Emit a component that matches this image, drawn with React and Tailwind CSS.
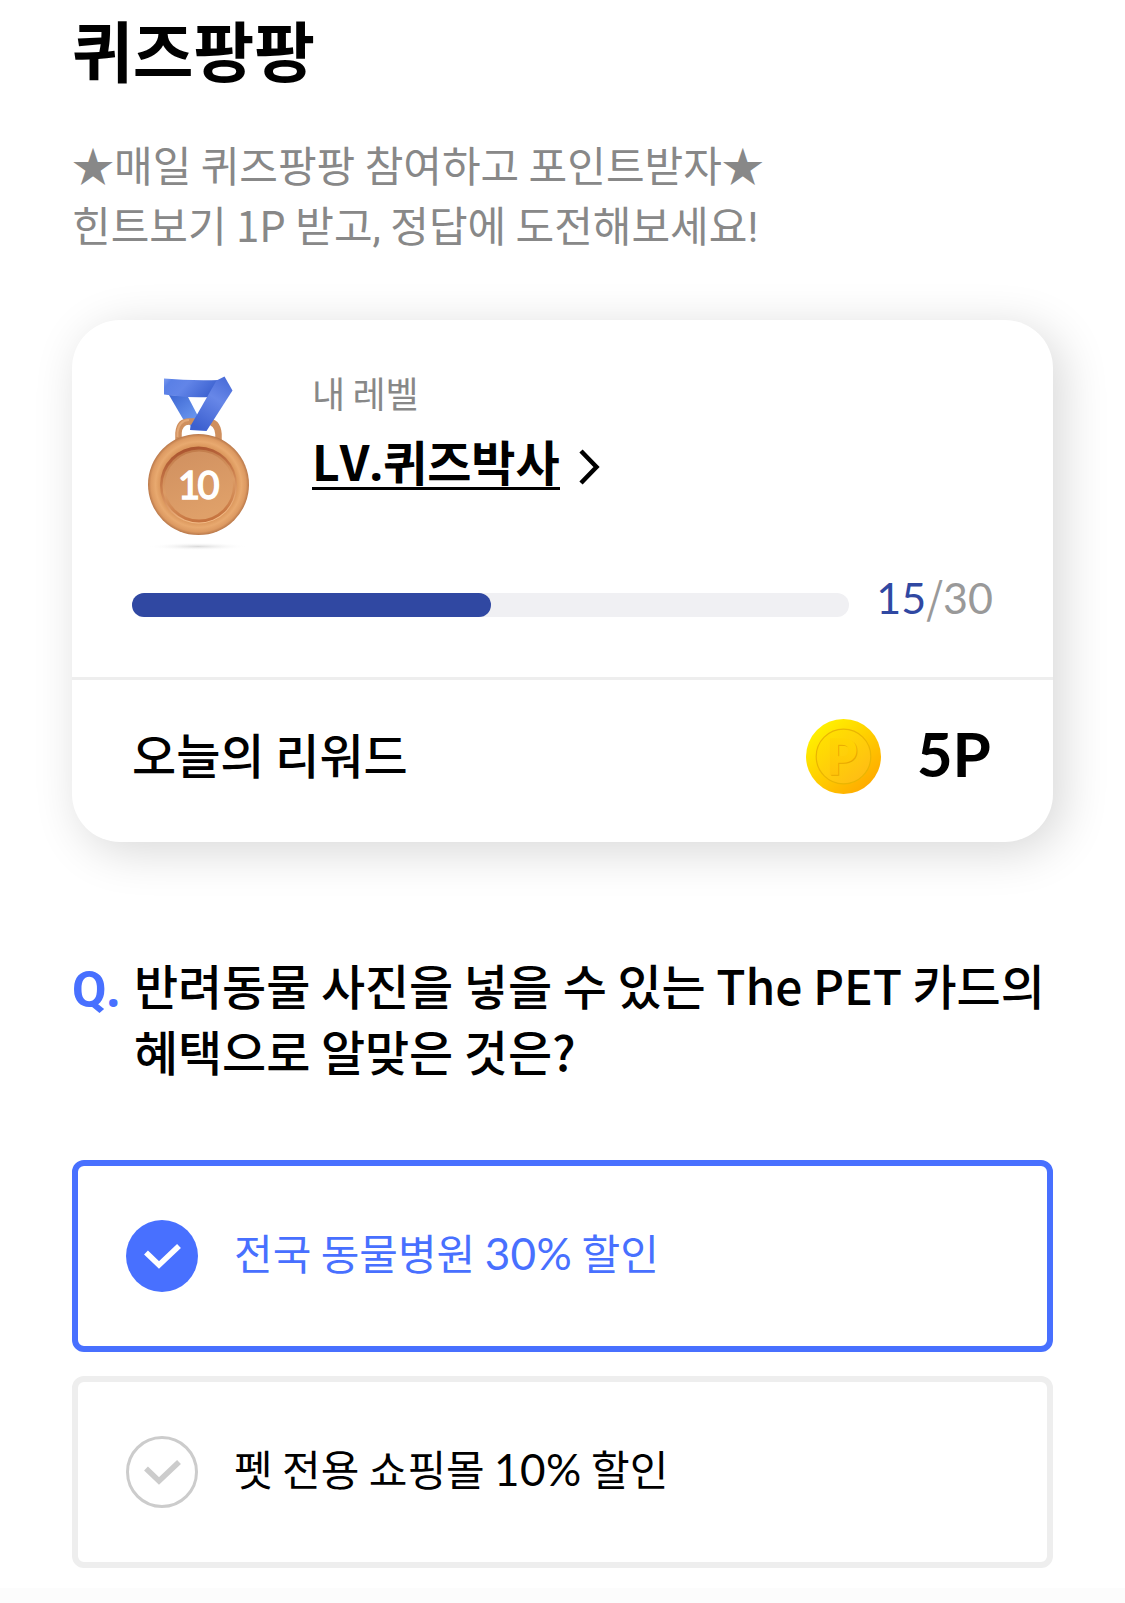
import { useState } from 'react'

const options = [
  { id: 1, before: '전국 동물병원 ', rate: '30%', after: ' 할인' },
  { id: 2, before: '펫 전용 쇼핑몰 ', rate: '10%', after: ' 할인' },
]

const level = { name: '퀴즈박사', current: 15, total: 30 }

function Medal() {
  return (
    <svg width="132" height="180" viewBox="0 0 132 180" className="block shrink-0">
      <defs>
        <linearGradient id="ribbonTop" x1="0" y1="0" x2="1" y2="0.3">
          <stop offset="0" stopColor="#7c9cf0" />
          <stop offset="0.15" stopColor="#5a80e6" />
          <stop offset="0.45" stopColor="#6285e8" />
          <stop offset="1" stopColor="#3d62d0" />
        </linearGradient>
        <linearGradient id="ribbonLeft" x1="0" y1="0" x2="0.7" y2="1">
          <stop offset="0" stopColor="#3d66d2" />
          <stop offset="1" stopColor="#709df3" />
        </linearGradient>
        <linearGradient id="ribbonFront" x1="0.8" y1="0" x2="0.3" y2="1">
          <stop offset="0" stopColor="#4a6cd8" />
          <stop offset="0.4" stopColor="#6787e8" />
          <stop offset="1" stopColor="#3c60d0" />
        </linearGradient>
        <radialGradient id="rim" cx="0.5" cy="0.5" r="0.5">
          <stop offset="0.74" stopColor="#d99459" />
          <stop offset="0.85" stopColor="#e8a96f" />
          <stop offset="0.94" stopColor="#dd9a62" />
          <stop offset="1" stopColor="#b9784a" />
        </radialGradient>
        <linearGradient id="groove" x1="0.35" y1="0" x2="0.6" y2="1">
          <stop offset="0" stopColor="#a9522e" />
          <stop offset="0.45" stopColor="#cb7f4d" />
          <stop offset="1" stopColor="#f6c08b" />
        </linearGradient>
        <linearGradient id="grooveInner" x1="0.4" y1="0" x2="0.6" y2="1">
          <stop offset="0" stopColor="#c07a49" />
          <stop offset="0.5" stopColor="#dc9c66" />
          <stop offset="1" stopColor="#c4703c" />
        </linearGradient>
        <linearGradient id="face" x1="0" y1="0" x2="0.4" y2="1">
          <stop offset="0" stopColor="#d09060" />
          <stop offset="1" stopColor="#dfa069" />
        </linearGradient>
        <radialGradient id="ground">
          <stop offset="0" stopColor="#d9d9d9" />
          <stop offset="1" stopColor="#ffffff" stopOpacity="0" />
        </radialGradient>
      </defs>
      <ellipse cx="66" cy="171.500" rx="50" ry="4" fill="url(#ground)" />
      {/* ribbon */}
      <path d="M37 20 L55.500 21 L67 43 L62 54 L51 44 Z" fill="url(#ribbonLeft)" />
      <path d="M32 3.500 Q58 6 88 5 L78 22 Q54 23 32 19.500 Z" fill="url(#ribbonTop)" />
      {/* ring */}
      <path d="M46.500 66 L46.500 58 Q47.500 46.500 57 46.500 L75 46.500 Q85.500 46.500 86.500 59 L86.500 66" fill="none" stroke="#cf8f5d" strokeWidth="6.500" />
      <path d="M45.500 62 L45.500 57 Q47 45.500 57 45" fill="none" stroke="#e3a877" strokeWidth="2" />
      <path d="M92.500 1.500 L100.500 15.500 L74.500 56 L58 55 L58.500 51 L84.500 5.500 Z" fill="url(#ribbonFront)" />
      {/* disc */}
      <circle cx="66.500" cy="109.500" r="50.500" fill="url(#rim)" />
      <circle cx="66.500" cy="110" r="38.500" fill="url(#groove)" />
      <circle cx="67" cy="111" r="36.500" fill="url(#grooveInner)" />
      <circle cx="67" cy="110.500" r="34" fill="url(#face)" />
      <text
        x="65.500"
        y="123.500"
        textAnchor="middle"
        fill="#fff"
        stroke="#fff"
        strokeWidth="1.500"
        fontSize="38"
        letterSpacing="-2.500"
        fontFamily="Lato, sans-serif"
      >
        10
      </text>
    </svg>
  )
}

function Coin() {
  return (
    <svg width="75" height="75" viewBox="0 0 75 75" className="block">
      <defs>
        <linearGradient id="coinEdge" x1="0.15" y1="0.1" x2="0.85" y2="0.9">
          <stop offset="0" stopColor="#fff200" />
          <stop offset="1" stopColor="#ffaa00" />
        </linearGradient>
        <linearGradient id="coinFace" x1="0.15" y1="0.1" x2="0.85" y2="0.9">
          <stop offset="0" stopColor="#ffe000" />
          <stop offset="1" stopColor="#ffbd14" />
        </linearGradient>
        <linearGradient id="coinLetter" x1="0" y1="0" x2="0" y2="1">
          <stop offset="0" stopColor="#ffdc00" />
          <stop offset="1" stopColor="#ffbe0c" />
        </linearGradient>
      </defs>
      <circle cx="37.500" cy="37.500" r="37.500" fill="url(#coinEdge)" />
      <circle cx="37.500" cy="37.500" r="27.300" fill="url(#coinFace)" stroke="#eab503" strokeWidth="1.200" />
      <g fontSize="48" fontWeight="700" fontFamily="Lato, sans-serif" strokeWidth="1.500">
        <text x="22" y="56" fill="#e9a900" stroke="#e9a900">P</text>
        <text x="21" y="54.500" fill="url(#coinLetter)" stroke="url(#coinLetter)">P</text>
      </g>
    </svg>
  )
}

function CheckIcon({ checked }) {
  return (
    <svg width="72" height="72" viewBox="0 0 72 72" className="block shrink-0">
      {checked ? (
        <circle cx="36" cy="36" r="36" fill="#4870ff" />
      ) : (
        <circle cx="36" cy="36" r="34.500" fill="#fff" stroke="#ccc" strokeWidth="3" />
      )}
      <path d="M20 32.500 L33 45 L53 26" fill="none" stroke={checked ? '#fff' : '#ccc'} strokeWidth="5.600" />
    </svg>
  )
}

function OptionCard({ option, checked, onSelect }) {
  return (
    <button
      onClick={onSelect}
      className={`flex h-48 w-full items-center rounded-xl border-6 bg-white pl-12 text-left text-[42px] leading-[60px] ${
        checked ? 'border-[#4870ff] text-[#4870ff]' : 'border-[#eee] text-black'
      }`}
    >
      <CheckIcon checked={checked} />
      <span className="-mt-[8px] ml-9">
        {option.before}
        <span className="font-[Lato,sans-serif] text-[44px] leading-none tracking-[0.4px]">{option.rate}</span>
        {option.after}
      </span>
    </button>
  )
}

export default function App() {
  const [selected, setSelected] = useState(1)
  const percent = (level.current / level.total) * 100

  return (
    <div className="h-[1603px] overflow-hidden bg-white px-[72px] font-['Noto_Sans_CJK_KR',sans-serif] text-black">
      <h1 className="pt-[3px] text-[66px] leading-[90px] font-bold">퀴즈팡팡</h1>

      <p className="mt-[41px] text-[42px] leading-[60px] text-[#888]">
        ★매일 퀴즈팡팡 참여하고 포인트받자★
        <br />
        힌트보기 1P 받고<span className="font-[Roboto,sans-serif] leading-none">,</span> 정답에 도전해보세요
        <span className="font-[Roboto,sans-serif] leading-none">!</span>
      </p>

      {/* Level card */}
      <section className="mt-[66px] h-[522px] rounded-[48px] bg-white shadow-[9px_9px_48px_rgba(0,0,0,0.16)]">
        <div className="h-[360px] border-b-3 border-[#eee] px-[60px] pt-[55px]">
          <div className="flex h-[180px]">
            <Medal />
            <div className="ml-[48px]">
              <p className="-mt-px text-[36px] leading-[36px] tracking-[-0.3px] text-[#888]">내 레벨</p>
              <a className="mt-[25px] flex items-start">
                <span className="border-b-3 border-black text-[48px] leading-[50px] font-bold whitespace-nowrap">
                  <span className="[font-kerning:none]">LV</span>
                  <span className="font-['Noto_Sans',sans-serif] leading-none">.</span>
                  {level.name}
                </span>
                <svg width="24" height="36" viewBox="0 0 24 36" className="mt-[14px] ml-[18px]">
                  <path d="M3 2 L18.500 18 L3 34" fill="none" stroke="#000" strokeWidth="4.500" />
                </svg>
              </a>
            </div>
          </div>
          <div className="mt-[18px] flex items-center justify-between">
            <div className="mt-[14px] h-6 w-[717px] rounded-full bg-[#f0f0f3]">
              <div className="h-6 rounded-full bg-[#3048a2]" style={{ width: `${percent}%` }} />
            </div>
            <span className="font-[Lato,sans-serif] text-[43px] leading-[50px] text-[#999]">
              <span className="text-[#3048a2]">{level.current}</span>
              <span className="font-['Noto_Sans_CJK_KR',sans-serif] leading-none">/</span>
              {level.total}
            </span>
          </div>
        </div>
        <div className="flex h-[153px] items-center justify-between pr-[62px] pl-[60px]">
          <span className="-mt-2 text-[48px] font-medium">오늘의 리워드</span>
          <div className="flex items-center gap-9">
            <Coin />
            <span className="-mt-2 font-[Lato,sans-serif] text-[62px] leading-[72px] font-bold">5P</span>
          </div>
        </div>
      </section>

      {/* Question */}
      <div className="mt-[109px] flex text-[48px] leading-[66px]">
        <span className="w-[62px] shrink-0 pt-0.5 font-bold text-[#4870ff]">
          <span className="font-[Roboto,sans-serif] text-[50px] leading-none">Q</span>
          <span className="font-['Noto_Sans',sans-serif] leading-none">.</span>
        </span>
        <p className="font-medium tracking-[-0.1px] whitespace-nowrap">
          반려동물 사진을 넣을 수 있는 The PET 카드의
          <br />
          혜택으로 알맞은 것은?
        </p>
      </div>

      <div className="mt-[77px] flex flex-col gap-6">
        {options.map(o => (
          <OptionCard key={o.id} option={o} checked={o.id === selected} onSelect={() => setSelected(o.id)} />
        ))}
      </div>
      <div className="-mx-[72px] mt-[20px] h-4 bg-[#fcfcfc]" />
    </div>
  )
}
